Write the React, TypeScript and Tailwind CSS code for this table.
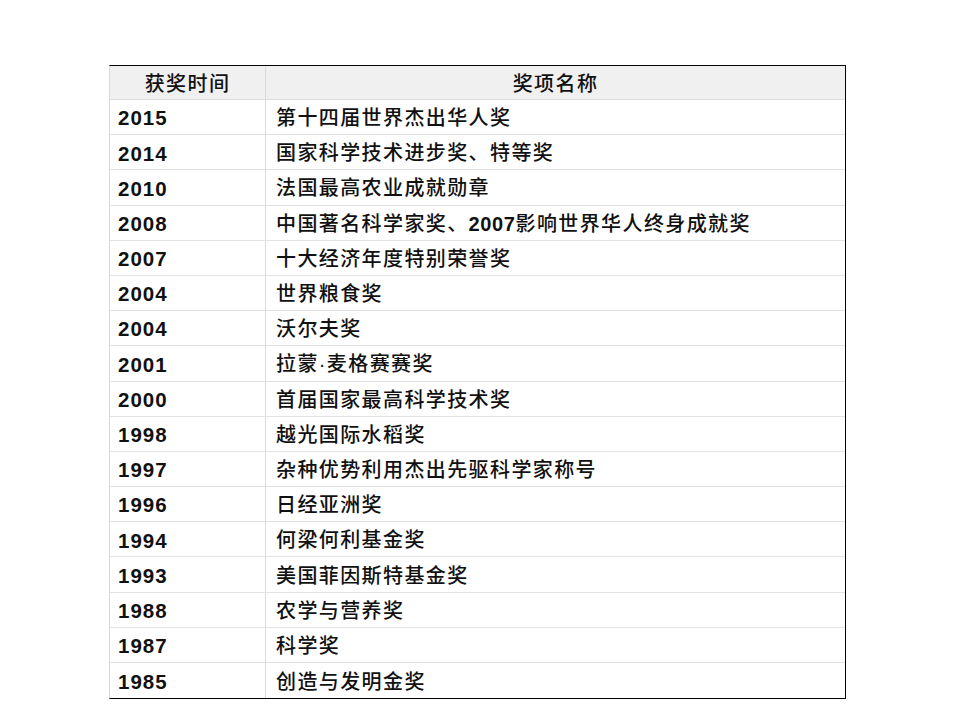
import React from "react";

const rows: [string, React.ReactNode][] = [
  ["2015", "第十四届世界杰出华人奖"],
  ["2014", "国家科学技术进步奖、特等奖"],
  ["2010", "法国最高农业成就勋章"],
  ["2008", <>中国著名科学家奖、<span className="font-bold tracking-[0.6px]">2007</span>影响世界华人终身成就奖</>],
  ["2007", "十大经济年度特别荣誉奖"],
  ["2004", "世界粮食奖"],
  ["2004", "沃尔夫奖"],
  ["2001", "拉蒙·麦格赛赛奖"],
  ["2000", "首届国家最高科学技术奖"],
  ["1998", "越光国际水稻奖"],
  ["1997", "杂种优势利用杰出先驱科学家称号"],
  ["1996", "日经亚洲奖"],
  ["1994", "何梁何利基金奖"],
  ["1993", "美国菲因斯特基金奖"],
  ["1988", "农学与营养奖"],
  ["1987", "科学奖"],
  ["1985", "创造与发明金奖"],
];

export default function App() {
  return (
    <div
      className="w-[960px] h-[720px] bg-white pt-[65px] pl-[109px] text-[#111]"
      style={{ fontFamily: '"Liberation Sans", "Noto Sans CJK SC", sans-serif' }}
    >
      <div className="w-[737px] border-t border-r border-b border-l border-t-black border-r-black border-b-black border-l-[#d8d8d8]">
        <div className="flex h-[34px] bg-[#f0f0f0] border-b border-[#dcdcdc] text-[20px] leading-none font-medium">
          <div className="w-[156px] border-r border-[#dcdcdc] flex items-center justify-center tracking-[1.4px] pt-[3px]">
            获奖时间
          </div>
          <div className="flex-1 flex items-center justify-center tracking-[1.4px] pt-[3px]">
            奖项名称
          </div>
        </div>
        {rows.map(([year, name], i) => (
          <div
            key={i}
            className={`flex h-[35.2px] leading-none ${i < rows.length - 1 ? "border-b border-[#e2e2e2]" : ""}`}
          >
            <div className="w-[156px] border-r border-[#dcdcdc] flex items-center pl-[8px] pt-[3px] text-[20.5px] font-bold tracking-[1px]">
              {year}
            </div>
            <div className="flex-1 flex items-center pl-[10px] pt-[2px] text-[20px] tracking-[1.4px] font-medium">
              <span>{name}</span>
            </div>
          </div>
        ))}
      </div>
    </div>
  );
}
